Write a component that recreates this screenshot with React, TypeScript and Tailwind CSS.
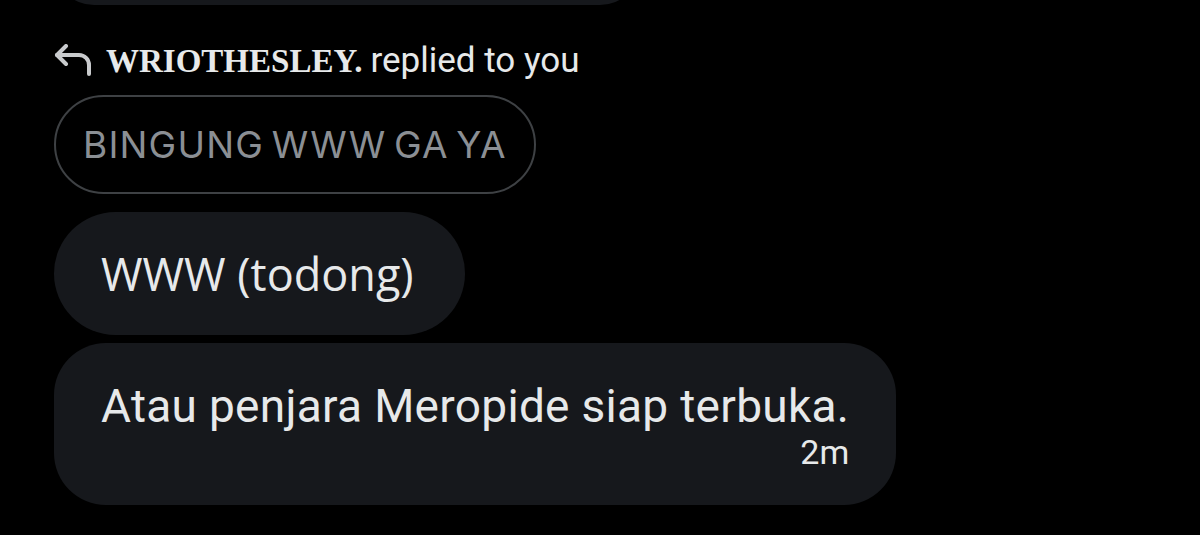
import React from "react";

function ReplyIcon() {
  return (
    <svg
      width="40"
      height="32"
      viewBox="0 0 40 32"
      fill="none"
      stroke="#c9cbcd"
      strokeWidth="4"
      strokeLinecap="round"
      strokeLinejoin="round"
    >
      <path d="M12 2 3 11l9 9" />
      <path d="M3 11h22a10 10 0 0 1 10 10v9" />
    </svg>
  );
}

export default function App() {
  return (
    <div className="w-[1200px] h-[535px] bg-black overflow-hidden pl-[54px] font-['Liberation_Sans',sans-serif]">
      {/* previous message, cut off by the top edge */}
      <div className="w-[586px] h-[80px] mt-[-75px] rounded-[40px] bg-[#16181c]" />

      {/* reply header */}
      <div className="flex items-center gap-[12px] mt-[38px] h-[34px]">
        <ReplyIcon />
        <p className="flex items-baseline gap-[8px] text-[#e7e9ea] leading-none whitespace-nowrap">
          <span className="font-['Liberation_Serif',serif] font-bold text-[33px]">
            WRIOTHESLEY.
          </span>
          <span className="font-['Roboto',sans-serif] text-[35px] tracking-[0px]">
            replied to you
          </span>
        </p>
      </div>

      {/* quoted message */}
      <div className="mt-[18px] w-fit h-[99px] flex items-center pl-[27px] pr-[27px] rounded-full border-2 border-[#3e4144]">
        <span className="font-['Inter',sans-serif] text-[37px] text-[#8b8f94] tracking-[1.2px] [word-spacing:-4px]">
          BINGUNG WWW GA YA
        </span>
      </div>

      {/* replies */}
      <div className="flex flex-col items-start gap-[8px] mt-[18px]">
        <div className="h-[123px] flex items-center pl-[47px] pr-[51px] rounded-full bg-[#16181c]">
          <span className="font-['Open_Sans',sans-serif] text-[45px] text-[#e7e9ea]">
            WWW (todong)
          </span>
        </div>
        <div className="h-[162px] flex flex-col justify-center pt-[4px] pl-[47px] pr-[47px] rounded-[52px] bg-[#16181c]">
          <span className="font-['Roboto',sans-serif] text-[46px] leading-[52px] text-[#e7e9ea] tracking-[0.3px]">
            Atau penjara Meropide siap terbuka.
          </span>
          <span className="self-end font-['Roboto',sans-serif] text-[34px] leading-[40px] text-[#e7e9ea]">
            2m
          </span>
        </div>
      </div>
    </div>
  );
}
